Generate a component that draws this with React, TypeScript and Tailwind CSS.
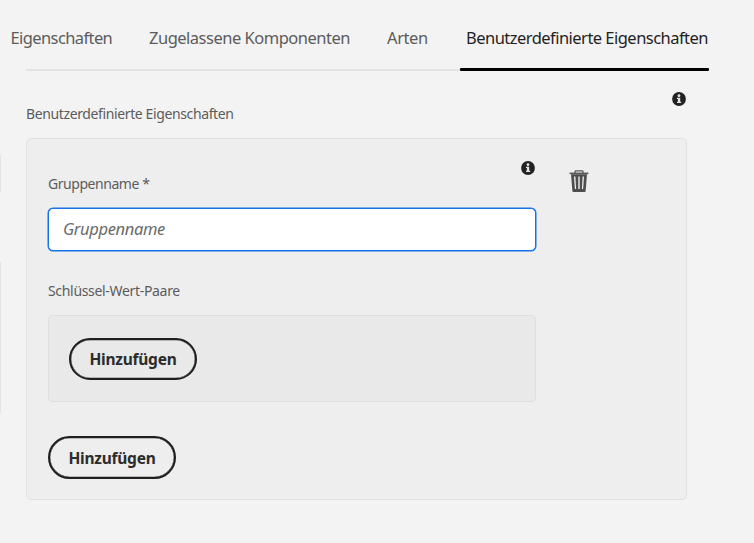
import React from "react";

function InfoIcon({ className = "" }: { className?: string }) {
  return (
    <svg viewBox="0 0 14 14" className={`block h-[14px] w-[14px] ${className}`}>
      <circle cx="7" cy="7" r="6.9" fill="#222222" />
      <circle cx="7" cy="3.7" r="1.4" fill="#e4e4e4" />
      <path d="M5 5.7H8.2V9.7H9.2V11.1H5V9.7H5.9V7.1H5Z" fill="#e4e4e4" />
    </svg>
  );
}

function TrashIcon() {
  return (
    <svg viewBox="0 0 20 22" className="block h-[22px] w-[20px]" fill="none">
      <path d="M6 3V1.5Q6 .8 6.8 .8H13.2Q14 .8 14 1.5V3" stroke="#5a5a5a" strokeWidth="1.3" />
      <path d="M.6 3.4H19.4" stroke="#5a5a5a" strokeWidth="1.7" />
      <path
        fillRule="evenodd"
        d="M2 4.2H18L16.6 21.2Q16.5 22 15.7 22H4.3Q3.5 22 3.4 21.2ZM5 6.6L5.9 19H7.1L6.4 6.6ZM9.3 6.6V19H10.7V6.6ZM13.6 6.6L12.9 19H14.1L15 6.6Z"
        fill="#4e4e4e"
      />
    </svg>
  );
}

function AddButton({ className = "" }: { className?: string }) {
  return (
    <button
      className={`flex w-[128px] items-center justify-center rounded-full border-2 border-[#1f1f1f] text-[15.5px] font-bold leading-5 tracking-[-0.25px] text-[#2c2c2c] shadow-[inset_0_0_0_0.3px_#1f1f1f] ${className}`}
    >
      <span className="whitespace-nowrap">Hinzufügen</span>
    </button>
  );
}

export default function App() {
  return (
    <div className="flex h-[543px] w-[754px] overflow-hidden bg-[#f3f3f3] font-['Noto_Sans',sans-serif] text-[#5c5c5c]">
      <div className="flex w-px shrink-0 flex-col pt-[155px]">
        <div className="h-[37px] bg-[#e4e4e4]" />
        <div className="mt-[70px] h-[151px] bg-[#e4e4e4]" />
      </div>
      <main className="flex w-[753px] flex-col">
        <nav className="flex h-[68px] pl-[9.5px] pt-[26px] text-[16.5px] leading-6">
          <span className="w-[138.5px] shrink-0 whitespace-nowrap tracking-[-0.6px]">Eigenschaften</span>
          <span className="w-[238px] shrink-0 whitespace-nowrap tracking-[-0.5px]">Zugelassene Komponenten</span>
          <span className="w-[79px] shrink-0 whitespace-nowrap tracking-[-0.4px]">Arten</span>
          <span className="whitespace-nowrap tracking-[-0.53px] text-[#1f1f1f]">Benutzerdefinierte Eigenschaften</span>
        </nav>
        <div className="ml-[25px] flex items-center">
          <div className="h-[2px] w-[434px] bg-[#e3e3e3]" />
          <div className="h-[3px] w-[248.5px] rounded-[1px] bg-black" />
        </div>
        <div className="ml-[25px] flex h-[67px] w-[660px] justify-between">
          <h2 className="whitespace-nowrap pt-[33px] text-[14px] leading-5 tracking-[-0.38px]">Benutzerdefinierte Eigenschaften</h2>
          <InfoIcon className="mt-[21px]" />
        </div>
        <section className="ml-[25px] flex h-[362px] w-[661px] rounded-[5px] border border-[#e1e1e1] bg-[#eeeeee] pl-[21px]">
          <div className="w-[488px]">
            <div className="flex h-[69px] justify-between">
              <label className="whitespace-nowrap pt-[35px] text-[14px] leading-5 tracking-[-0.45px]">Gruppenname *</label>
              <InfoIcon className="mt-[22px] mr-[1px]" />
            </div>
            <input
              placeholder="Gruppenname"
              className="block h-[43px] w-[488px] rounded-[5px] border border-[#1473e6] bg-white pb-[2px] pl-[14px] text-[16.5px] italic leading-6 tracking-[-0.35px] shadow-[0_0_0_0.5px_#1473e6] outline-none placeholder:text-[#6a6a6a]"
            />
            <div className="pt-[30px] text-[14px] leading-5 tracking-[-0.32px]">Schlüssel-Wert-Paare</div>
            <div className="mt-[14px] h-[87px] rounded-[4px] border border-[#dfdfdf] bg-[#e9e9e9] pl-5 pt-[22px]">
              <AddButton className="h-[42px]" />
            </div>
            <div className="pt-[34px]">
              <AddButton className="h-[43px]" />
            </div>
          </div>
          <div className="pl-[33px] pt-[31px]">
            <TrashIcon />
          </div>
        </section>
      </main>
    </div>
  );
}
